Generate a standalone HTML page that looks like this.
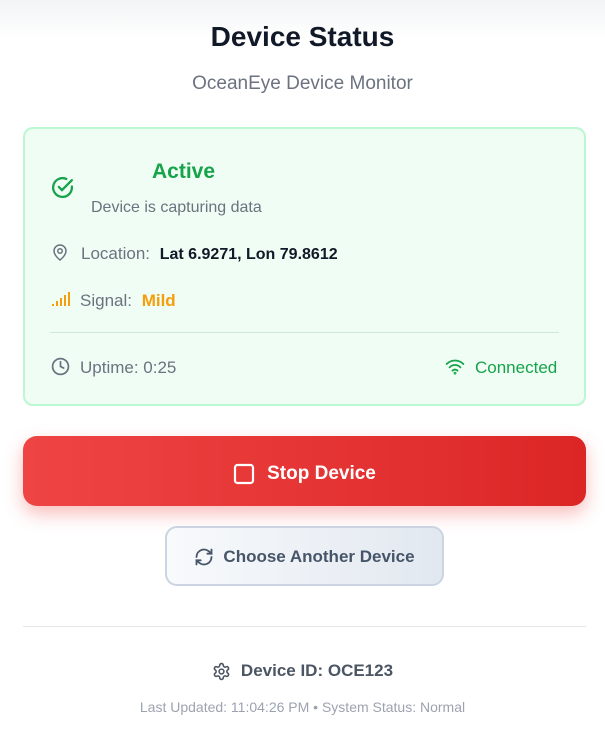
<!DOCTYPE html>
<html><head><meta charset="utf-8"><style>
*{box-sizing:border-box;margin:0;padding:0}
body{width:605px;height:738px;overflow:hidden;background:#fff;font-family:"Liberation Sans",sans-serif;position:relative}
.top{position:absolute;left:0;top:0;width:605px;height:40px;background:linear-gradient(#f3f4f6,#fff)}
.abs{position:absolute}
h1{position:absolute;top:21px;width:605px;text-align:center;font-size:28px;font-weight:bold;color:#111827}
.sub{top:73px;width:605px;text-align:center;font-size:19px;color:#6b7280}
.card{left:23px;top:127px;width:563px;height:279px;background:#f0fdf4;border:2px solid #bbf7d0;border-radius:10px}
.t{font-size:17px;color:#6b7280}
.stop{left:23px;top:436px;width:563px;height:70px;padding-top:5px;border-radius:14px;background:linear-gradient(90deg,#ef4444,#dc2626);box-shadow:0 8px 18px rgba(239,68,68,.35);color:#fff;font-weight:bold;font-size:19px;display:flex;align-items:center;justify-content:center}
.choose{left:165px;top:526px;width:279px;height:60px;padding-top:2px;border-radius:12px;background:linear-gradient(90deg,#f8fafc,#e2e8f0);border:2px solid #cbd5e1;color:#475569;font-weight:bold;font-size:17px;display:flex;align-items:center;justify-content:center}
</style></head><body>
<div class="top"></div>
<h1>Device Status</h1>
<div class="abs sub">OceanEye Device Monitor</div>
<div class="abs card"></div>
<svg class="abs" style="left:50px;top:175px" width="25" height="25" viewBox="0 0 24 24" fill="none" stroke="#16a34a" stroke-width="2.2" stroke-linecap="round"><path d="M21 11v1a9 9 0 1 1-5.3-8.2"/><path d="M8.5 11.5l3 3L21 5"/></svg>
<div class="abs" style="left:152px;top:160px;font-size:21px;font-weight:bold;color:#16a34a">Active</div>
<div class="abs t" style="left:91px;top:199px;font-size:16px">Device is capturing data</div>
<svg class="abs" style="left:51px;top:243px" width="18" height="19" viewBox="0 0 24 24" fill="none" stroke="#6b7280" stroke-width="2"><path d="M20 10c0 6-8 12-8 12S4 16 4 10a8 8 0 0 1 16 0z"/><circle cx="12" cy="10" r="3"/></svg>
<div class="abs t" style="left:81px;top:244px">Location: <b style="color:#111827;margin-left:5px;font-size:16px">Lat 6.9271, Lon 79.8612</b></div>
<svg class="abs" style="left:51px;top:291px" width="19" height="16"><g fill="#f59e0b"><rect x="1" y="13" width="2" height="2"/><rect x="5" y="10" width="2" height="5"/><rect x="9" y="7" width="2" height="8"/><rect x="13" y="4" width="2" height="11"/><rect x="17" y="1" width="2" height="14"/></g></svg>
<div class="abs t" style="left:80px;top:291px">Signal: <b style="color:#f59e0b;margin-left:5px">Mild</b></div>
<div class="abs" style="left:50px;top:332px;width:509px;height:1px;background:#d1e7d9"></div>
<svg class="abs" style="left:51px;top:357px" width="19" height="19" viewBox="0 0 24 24" fill="none" stroke="#6b7280" stroke-width="2.2" stroke-linecap="round"><circle cx="12" cy="12" r="10"/><path d="M12 6v6l4 2"/></svg>
<div class="abs t" style="left:80px;top:358px">Uptime: 0:25</div>
<svg class="abs" style="left:445px;top:358px" width="20" height="17" viewBox="0 0 24 20" fill="none" stroke="#16a34a" stroke-width="2.2" stroke-linecap="round"><path d="M2 7a14 14 0 0 1 20 0"/><path d="M5.5 11a9 9 0 0 1 13 0"/><path d="M9 15a4 4 0 0 1 6 0"/><circle cx="12" cy="18" r=".6"/></svg>
<div class="abs" style="left:475px;top:358px;font-size:17px;color:#16a34a">Connected</div>
<div class="abs stop"><svg width="22" height="22" viewBox="0 0 22 22" style="margin-right:12px"><rect x="2" y="2" width="18" height="18" rx="2.5" fill="none" stroke="#fff" stroke-width="2.2"/></svg>Stop Device</div>
<div class="abs choose"><svg width="20" height="20" viewBox="0 0 24 24" fill="none" stroke="#475569" stroke-width="2.2" stroke-linecap="round" style="margin-right:9px"><path d="M3 12a9 9 0 0 1 15-6.7L21 8"/><path d="M21 3v5h-5"/><path d="M21 12a9 9 0 0 1-15 6.7L3 16"/><path d="M8 16H3v5"/></svg>Choose Another Device</div>
<div class="abs" style="left:23px;top:626px;width:563px;height:1px;background:#e5e7eb"></div>
<div class="abs" style="top:661px;width:605px;display:flex;justify-content:center;align-items:center;font-size:17px;font-weight:bold;color:#4b5563"><svg width="19" height="19" viewBox="0 0 24 24" fill="none" stroke="#4b5563" stroke-width="2" style="margin-right:10px"><path d="M12.2 2h-.4a2 2 0 0 0-2 2v.2a2 2 0 0 1-1 1.7l-.4.3a2 2 0 0 1-2 0l-.2-.1a2 2 0 0 0-2.7.7l-.2.4a2 2 0 0 0 .7 2.7l.2.1a2 2 0 0 1 1 1.7v.5a2 2 0 0 1-1 1.8l-.2.1a2 2 0 0 0-.7 2.7l.2.4a2 2 0 0 0 2.7.7l.2-.1a2 2 0 0 1 2 0l.4.3a2 2 0 0 1 1 1.7v.2a2 2 0 0 0 2 2h.4a2 2 0 0 0 2-2v-.2a2 2 0 0 1 1-1.7l.4-.3a2 2 0 0 1 2 0l.2.1a2 2 0 0 0 2.7-.7l.2-.4a2 2 0 0 0-.7-2.7l-.2-.1a2 2 0 0 1-1-1.8v-.5a2 2 0 0 1 1-1.7l.2-.1a2 2 0 0 0 .7-2.7l-.2-.4a2 2 0 0 0-2.7-.7l-.2.1a2 2 0 0 1-2 0l-.4-.3a2 2 0 0 1-1-1.7V4a2 2 0 0 0-2-2z"/><circle cx="12" cy="12" r="3"/></svg>Device ID: OCE123</div>
<div class="abs" style="top:699px;width:605px;text-align:center;font-size:14px;color:#9ca3af">Last Updated: 11:04:26 PM • System Status: Normal</div>
</body></html>
